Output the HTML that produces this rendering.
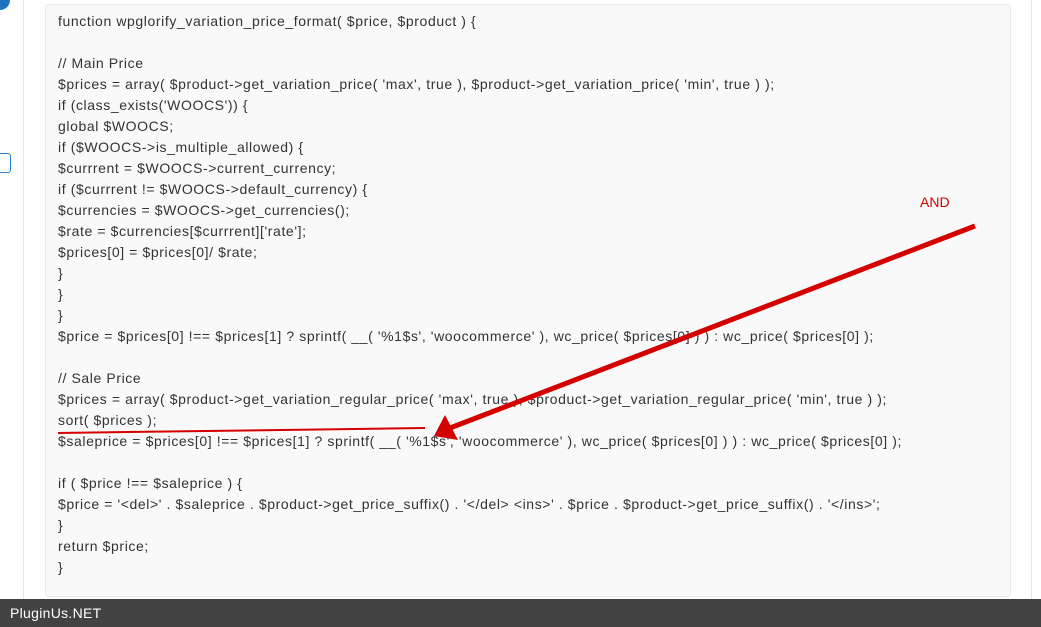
<!DOCTYPE html>
<html><head><meta charset="utf-8"><style>
html,body{margin:0;padding:0;width:1041px;height:627px;overflow:hidden;background:#fff;}
body{position:relative;font-family:"Liberation Sans","DejaVu Sans",sans-serif;}
.vl{position:absolute;top:0;width:1px;height:599px;background:#e6e6e6;}
.box{position:absolute;left:45px;top:4px;width:964px;height:591px;background:#f9f9f9;border:1px solid #e8e8e8;border-radius:4px;}
.code{position:absolute;left:58px;top:11px;font-size:14px;line-height:21px;color:#333;white-space:pre;letter-spacing:0.6px;}
.foot{position:absolute;left:0;top:599px;width:1041px;height:28px;background:#424242;color:#fff;font-size:14px;line-height:28px;padding-left:10px;box-sizing:border-box;letter-spacing:0.3px;}
.and{position:absolute;left:920px;top:194px;color:#d40000;font-size:14px;}
</style></head><body>
<div style="position:absolute;left:0;top:0;width:10px;height:10px;background:#1e73be;border-bottom-right-radius:10px;"></div>
<div style="position:absolute;left:-6px;top:153px;width:15px;height:18px;border:1px solid #2a7fd4;border-radius:3px;"></div>
<div class="vl" style="left:23px"></div>
<div class="vl" style="left:1031px"></div>
<div class="box"></div>
<div class="code">function wpglorify_variation_price_format( $price, $product ) {

// Main Price
$prices = array( $product-&gt;get_variation_price( 'max', true ), $product-&gt;get_variation_price( 'min', true ) );
if (class_exists('WOOCS')) {
global $WOOCS;
if ($WOOCS-&gt;is_multiple_allowed) {
$currrent = $WOOCS-&gt;current_currency;
if ($currrent != $WOOCS-&gt;default_currency) {
$currencies = $WOOCS-&gt;get_currencies();
$rate = $currencies[$currrent]['rate'];
$prices[0] = $prices[0]/ $rate;
}
}
}
$price = $prices[0] !== $prices[1] ? sprintf( __( '%1$s', 'woocommerce' ), wc_price( $prices[0] ) ) : wc_price( $prices[0] );

// Sale Price
$prices = array( $product-&gt;get_variation_regular_price( 'max', true ), $product-&gt;get_variation_regular_price( 'min', true ) );
sort( $prices );
$saleprice = $prices[0] !== $prices[1] ? sprintf( __( '%1$s', 'woocommerce' ), wc_price( $prices[0] ) ) : wc_price( $prices[0] );

if ( $price !== $saleprice ) {
$price = '&lt;del&gt;' . $saleprice . $product-&gt;get_price_suffix() . '&lt;/del&gt; &lt;ins&gt;' . $price . $product-&gt;get_price_suffix() . '&lt;/ins&gt;';
}
return $price;
}</div>
<div class="and">AND</div>
<svg style="position:absolute;left:0;top:0" width="1041" height="627">
<line x1="58" y1="433" x2="425" y2="428" stroke="#d40000" stroke-width="2"/>
<line x1="975" y1="226" x2="450" y2="428" stroke="#d40000" stroke-width="5"/>
<polygon points="434,436 445,415 458,440" fill="#d40000"/>
</svg>
<div class="foot">PluginUs.NET</div>
</body></html>
